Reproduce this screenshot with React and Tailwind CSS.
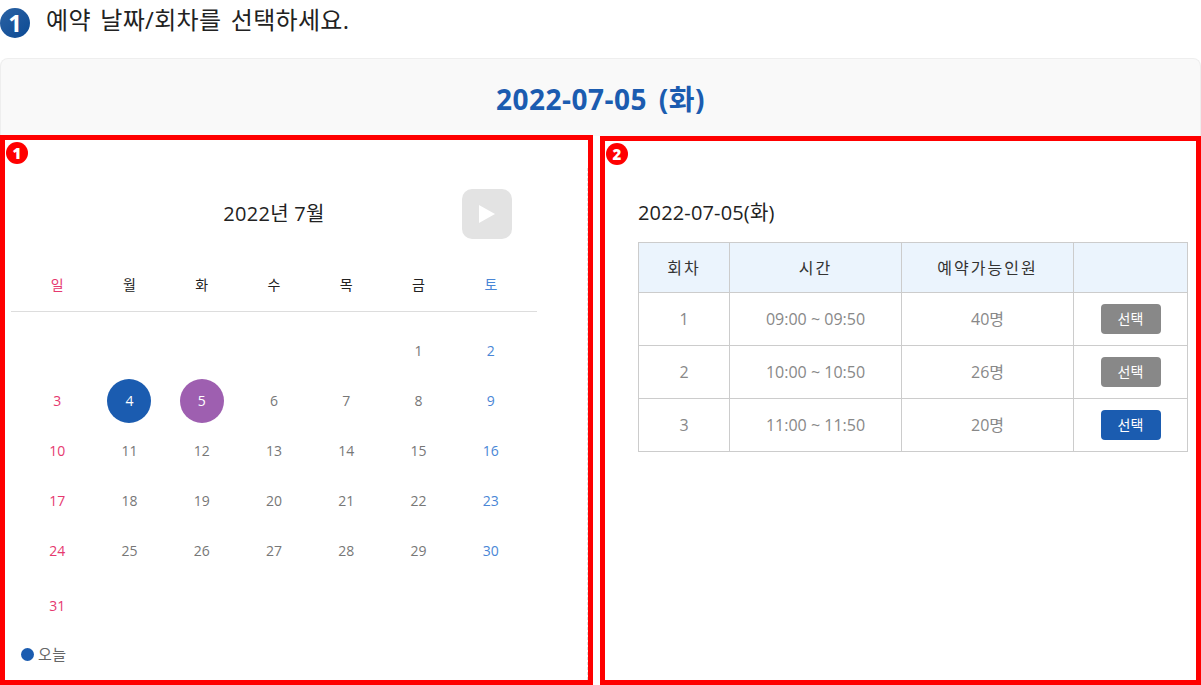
const weekdays = ["일", "월", "화", "수", "목", "금", "토"];

const weeks = [
  ["", "", "", "", "", "1", "2"],
  ["3", "4", "5", "6", "7", "8", "9"],
  ["10", "11", "12", "13", "14", "15", "16"],
  ["17", "18", "19", "20", "21", "22", "23"],
  ["24", "25", "26", "27", "28", "29", "30"],
];

const sessions = [
  { no: 1, time: "09:00 ~ 09:50", seats: "40명", active: false },
  { no: 2, time: "10:00 ~ 10:50", seats: "26명", active: false },
  { no: 3, time: "11:00 ~ 11:50", seats: "20명", active: true },
];

const dayColor = (i) => {
  if (i === 0) return "text-[#e6396f]";
  if (i === 6) return "text-[#4a86d6]";
  return "text-[#777777]";
};

const Marker = ({ n }) => (
  <span className="absolute left-[1px] top-[2px] flex h-[22px] w-[22px] items-center justify-center rounded-full bg-[#ff0000] text-[15px] font-extrabold leading-none text-white">
    {n}
  </span>
);

const Day = ({ value, i }) => {
  if (value === "4" || value === "5") {
    return (
      <div className="flex h-[50px] items-center justify-center">
        <span
          className={
            value === "4"
              ? "flex h-[44px] w-[44px] items-center justify-center rounded-full bg-[#1b5cb0] text-sm text-white"
              : "flex h-[44px] w-[44px] items-center justify-center rounded-full bg-[#9e5fb0] text-sm text-white"
          }
        >
          {value}
        </span>
      </div>
    );
  }
  return <div className={`flex h-[50px] items-center justify-center text-sm ${dayColor(i)}`}>{value}</div>;
};

const Calendar = () => (
  <section className="relative h-[550px] w-[593px] shrink-0 border-[5px] border-[#ff0000]">
    <Marker n="1" />
    {/* faint dashed edge along the inside of the box */}
    <span className="absolute bottom-0 right-0 top-[28px] border-r border-dashed border-[#dddddd]" />
    <div className="ml-[6px] w-[526px]">
      <div className="grid grid-cols-[1fr_auto_1fr] items-center pt-[49px]">
        <div />
        <h3 className="text-[20px] tracking-[0.3px] text-[#222222]">2022년 7월</h3>
        <div className="flex justify-end pr-[25px]">
          <button className="flex h-[50px] w-[50px] items-center justify-center rounded-[10px] bg-[#e3e3e3]">
            <svg width="16" height="18" viewBox="0 0 16 18">
              <polygon points="0,0 16,9 0,18" fill="#ffffff" />
            </svg>
          </button>
        </div>
      </div>
      <div className="mt-[21px] grid h-[52px] grid-cols-7 items-center border-b border-[#dddddd] px-[10px] pb-[1px]">
        {weekdays.map((d, i) => (
          <div key={d} className={`text-center text-sm ${i === 0 ? "text-[#e6396f]" : i === 6 ? "text-[#4a86d6]" : "text-[#222222]"}`}>
            {d}
          </div>
        ))}
      </div>
      <div className="grid grid-cols-7 px-[10px] pt-[14px]">
        {weeks.map((week) => week.map((value, i) => <Day key={`${value}-${i}`} value={value} i={i} />))}
        <div className="flex h-[59px] items-center justify-center text-sm text-[#e6396f]">31</div>
      </div>
      <div className="ml-[10px] mt-[9px] flex h-5 items-center gap-[4px] text-[15px] tracking-[0.5px] text-[#666666]">
        <span className="h-[13px] w-[13px] rounded-full bg-[#1b5cb0]" />
        오늘
      </div>
    </div>
  </section>
);

const Sessions = () => (
  <section className="relative h-[549px] w-[601px] shrink-0 border-[5px] border-[#ff0000] pl-[33px] pt-[58px]">
    <Marker n="2" />
    <p className="h-[43px] text-[20px] leading-[28px] tracking-[0.15px] text-[#222222]">2022-07-05(화)</p>
    <table className="w-[550px] table-fixed border-collapse text-center text-base">
      <thead>
        <tr className="h-[50px] bg-[#ebf4fd] tracking-[2px] text-[#333333]">
          <th className="w-[91px] border border-[#cccccc] font-normal">회차</th>
          <th className="w-[172px] border border-[#cccccc] font-normal">시간</th>
          <th className="w-[172px] border border-[#cccccc] font-normal">예약가능인원</th>
          <th className="border border-[#cccccc] font-normal" />
        </tr>
      </thead>
      <tbody className="text-[#888888]">
        {sessions.map((s) => (
          <tr key={s.no} className="h-[53px]">
            <td className="border border-[#cccccc]">{s.no}</td>
            <td className="border border-[#cccccc]">{s.time}</td>
            <td className="border border-[#cccccc]">{s.seats}</td>
            <td className="border border-[#cccccc]">
              <button
                className={
                  s.active
                    ? "h-[30px] w-[60px] rounded bg-[#1b5cb0] text-sm text-white"
                    : "h-[30px] w-[60px] rounded bg-[#888888] text-sm text-white"
                }
              >
                선택
              </button>
            </td>
          </tr>
        ))}
      </tbody>
    </table>
  </section>
);

const App = () => {
  return (
    <div className="h-[685px] w-[1201px] overflow-hidden bg-white font-['Open_Sans','Noto_Sans_CJK_KR',sans-serif]">
      <div className="flex h-[58px] gap-4 pt-2">
        <span className="flex h-[30px] w-[30px] items-center justify-center rounded-full bg-linear-to-br from-[#2a62a3] to-[#0a4a94] text-[24px] font-bold leading-none text-white">
          1
        </span>
        <h2 className="-mt-[1px] text-2xl leading-[26px] tracking-[0.3px] text-[#222222] [word-spacing:3px]">예약 날짜/회차를 선택하세요.</h2>
      </div>
      <div className="flex h-[78px] items-center justify-center rounded-t-lg border border-b-0 border-[#eeeeee] bg-[#f9f9f9] pt-[2px]">
        <h1 className="text-[28px] font-bold tracking-[0.5px] text-[#1b5cb0] [word-spacing:4px]">2022-07-05 (화)</h1>
      </div>
      <div className="-mt-[1px] flex items-start gap-[7px]">
        <Calendar />
        <div className="pt-[1px]">
          <Sessions />
        </div>
      </div>
    </div>
  );
};

export default App;
